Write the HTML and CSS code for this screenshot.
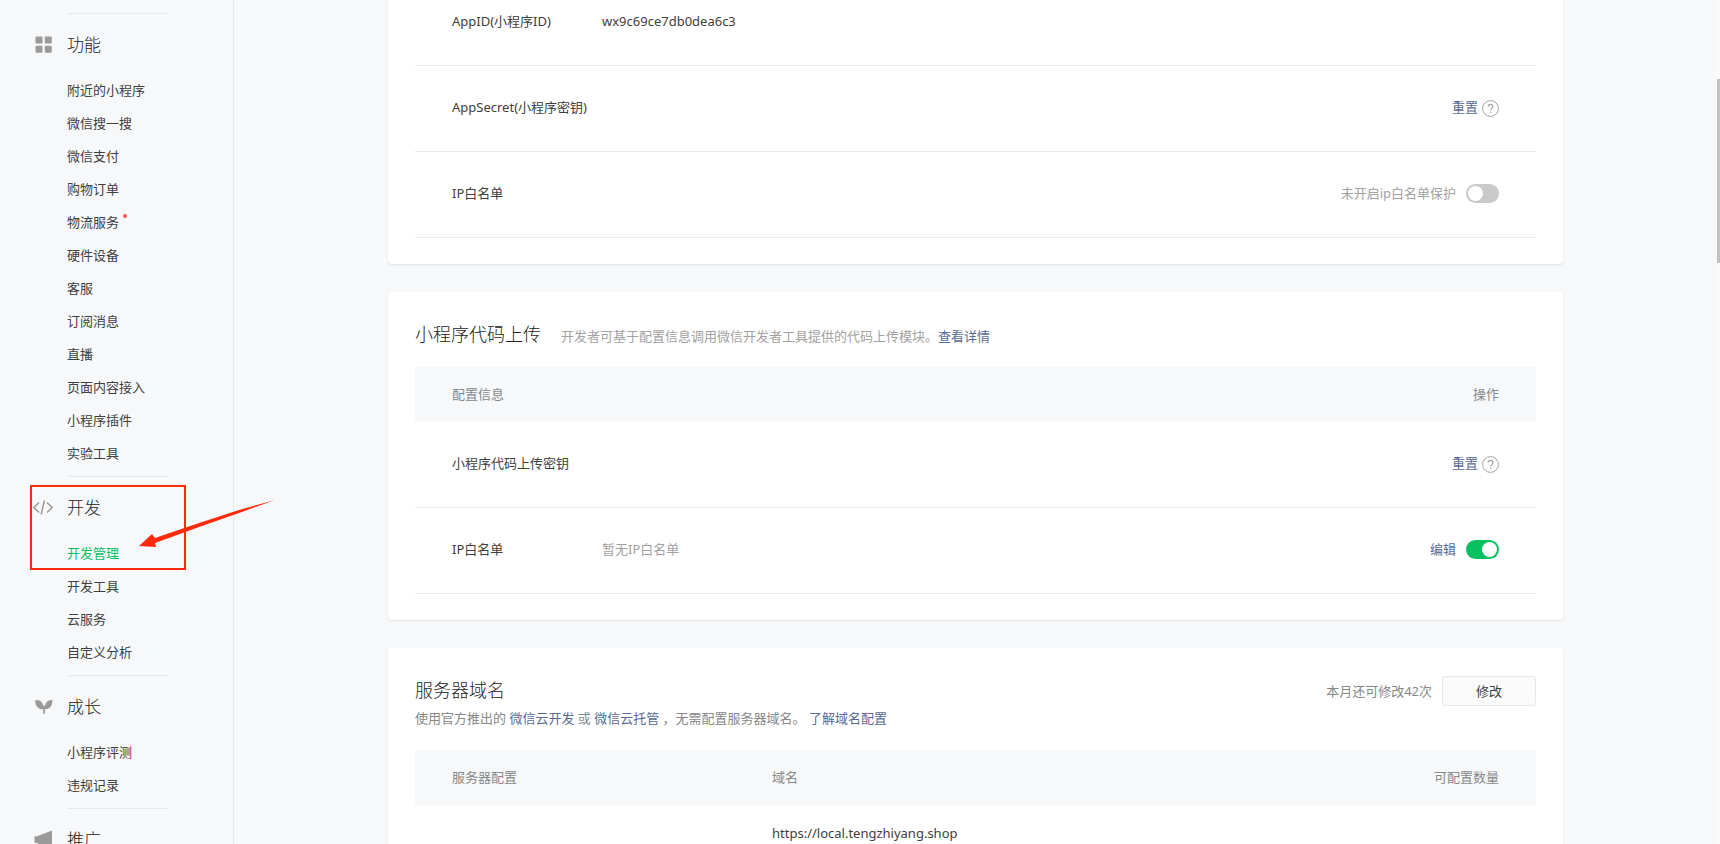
FILE: index.html
```
<!DOCTYPE html>
<html lang="zh-CN">
<head>
    <meta charset="UTF-8">
    <meta name="viewport" content="width=device-width, initial-scale=1.0">
    <title>开发管理</title>
    <link rel="stylesheet" href="styles.css">
</head>
<body>
    <div class="layout">
        <nav class="sidebar">
            <section class="menu-group">
                <h2 class="menu-title">
                    <svg class="menu-icon" viewBox="0 0 20 20" fill="#9a9a9a">
                        <rect x="2.5" y="1.5" width="7" height="7" rx="1"/>
                        <rect x="11.8" y="1.5" width="7" height="7" rx="1"/>
                        <rect x="2.5" y="10.8" width="7" height="7" rx="1"/>
                        <rect x="11.8" y="10.8" width="7" height="7" rx="1"/>
                    </svg>
                    功能
                </h2>
                <ul class="menu-list">
                    <li><a href="#">附近的小程序</a></li>
                    <li><a href="#">微信搜一搜</a></li>
                    <li><a href="#">微信支付</a></li>
                    <li><a href="#">购物订单</a></li>
                    <li><a href="#" class="has-dot">物流服务</a></li>
                    <li><a href="#">硬件设备</a></li>
                    <li><a href="#">客服</a></li>
                    <li><a href="#">订阅消息</a></li>
                    <li><a href="#">直播</a></li>
                    <li><a href="#">页面内容接入</a></li>
                    <li><a href="#">小程序插件</a></li>
                    <li><a href="#">实验工具</a></li>
                </ul>
            </section>

            <section class="menu-group">
                <h2 class="menu-title">
                    <svg class="menu-icon" viewBox="0 0 20 20" fill="none" stroke="#9a9a9a" stroke-width="1.5">
                        <path d="M6 4.5 L0.8 9.5 L6 14.5 M14 4.5 L19.2 9.5 L14 14.5 M11.3 2.5 L8.2 16.5"/>
                    </svg>
                    开发
                </h2>
                <ul class="menu-list">
                    <li><a href="#" class="active">开发管理</a></li>
                    <li><a href="#">开发工具</a></li>
                    <li><a href="#">云服务</a></li>
                    <li><a href="#">自定义分析</a></li>
                </ul>
                <!-- highlight around the current entry -->
                <div class="mark-box"></div>
                <svg class="mark-arrow" viewBox="0 0 136 50" fill="#ff2a0a">
                    <path d="M0 46 L13 34 L16 38 L60 23 L100 10 L136 0 L100 13 L60 27 L16 43 L17 47 Z"/>
                </svg>
            </section>

            <section class="menu-group">
                <h2 class="menu-title">
                    <svg class="menu-icon" viewBox="0 0 20 20" fill="#9a9a9a">
                        <path d="M2.3 3 C8 2.8 10.6 5.5 10.4 12.2 C5.6 13 2 9 2.3 3 Z"/>
                        <path d="M19.4 3 C14.2 2.8 11.6 6 11.9 12.2 C16.4 12.6 19.6 9 19.4 3 Z"/>
                        <path d="M10.1 8.5 h1.8 v8.3 h-1.8 Z"/>
                    </svg>
                    成长
                </h2>
                <ul class="menu-list">
                    <li><a href="#">小程序评测</a></li>
                    <li><a href="#">违规记录</a></li>
                </ul>
            </section>

            <section class="menu-group">
                <h2 class="menu-title">
                    <svg class="menu-icon" viewBox="0 0 20 20" fill="#9a9a9a">
                        <path d="M1.5 6.5 Q1.5 6 2.5 6 L3.5 6.5 L19 0.5 V17 L9 14 V18 H5 V13 H3 Q1.5 13 1.5 12 Z"/>
                    </svg>
                    推广
                </h2>
            </section>
        </nav>

        <main class="main">
            <div class="content">
                <section class="card card-first">
                    <table class="data-table">
                        <tbody>
                            <tr>
                                <td class="col-label">AppID(小程序ID)</td>
                                <td>wx9c69ce7db0dea6c3</td>
                                <td class="col-action"></td>
                            </tr>
                            <tr>
                                <td class="col-label">AppSecret(小程序密钥)</td>
                                <td></td>
                                <td class="col-action">
                                    <div class="actions">
                                        <a href="#">重置</a>
                                        <svg class="help-icon" viewBox="0 0 17 17" fill="none" stroke="#a3a3a3">
                                            <circle cx="8.5" cy="8.5" r="7.9"/>
                                            <path d="M6.2 6.8 C6.2 3.6 10.9 3.7 10.9 6.6 C10.9 8.4 8.6 8.4 8.6 10.5 M8.6 11.8 V13.1" stroke-width="1.2"/>
                                        </svg>
                                    </div>
                                </td>
                            </tr>
                            <tr>
                                <td class="col-label">IP白名单</td>
                                <td></td>
                                <td class="col-action">
                                    <div class="actions actions-switch">
                                        <label for="ipProtect" class="tip">未开启ip白名单保护</label>
                                        <input type="checkbox" class="switch" id="ipProtect">
                                    </div>
                                </td>
                            </tr>
                        </tbody>
                    </table>
                </section>

                <section class="card">
                    <div class="card-header">
                        <h3 class="card-title">小程序代码上传</h3>
                        <p class="card-desc light">开发者可基于配置信息调用微信开发者工具提供的代码上传模块。<a href="#">查看详情</a></p>
                    </div>
                    <table class="data-table">
                        <thead>
                            <tr>
                                <th class="col-label">配置信息</th>
                                <th></th>
                                <th class="col-action">操作</th>
                            </tr>
                        </thead>
                        <tbody>
                            <tr>
                                <td class="col-label">小程序代码上传密钥</td>
                                <td></td>
                                <td class="col-action">
                                    <div class="actions">
                                        <a href="#">重置</a>
                                        <svg class="help-icon" viewBox="0 0 17 17" fill="none" stroke="#a3a3a3">
                                            <circle cx="8.5" cy="8.5" r="7.9"/>
                                            <path d="M6.2 6.8 C6.2 3.6 10.9 3.7 10.9 6.6 C10.9 8.4 8.6 8.4 8.6 10.5 M8.6 11.8 V13.1" stroke-width="1.2"/>
                                        </svg>
                                    </div>
                                </td>
                            </tr>
                            <tr>
                                <td class="col-label"><label for="uploadIp">IP白名单</label></td>
                                <td class="tip">暂无IP白名单</td>
                                <td class="col-action">
                                    <div class="actions actions-switch">
                                        <a href="#">编辑</a>
                                        <input type="checkbox" class="switch" id="uploadIp" checked>
                                    </div>
                                </td>
                            </tr>
                        </tbody>
                    </table>
                </section>

                <section class="card">
                    <div class="card-header domain-header">
                        <div>
                            <h3 class="card-title">服务器域名</h3>
                            <p class="card-desc">使用官方推出的 <a href="#">微信云开发</a> 或 <a href="#">微信云托管</a> ，无需配置服务器域名。 <a href="#">了解域名配置</a></p>
                        </div>
                        <div class="modify">
                            <span>本月还可修改42次</span>
                            <button type="button" class="btn">修改</button>
                        </div>
                    </div>
                    <table class="data-table domain-table">
                        <thead>
                            <tr>
                                <th class="col-server">服务器配置</th>
                                <th>域名</th>
                                <th class="col-action">可配置数量</th>
                            </tr>
                        </thead>
                        <tbody>
                            <tr>
                                <td></td>
                                <td>https://local.tengzhiyang.shop</td>
                                <td></td>
                            </tr>
                        </tbody>
                    </table>
                </section>
            </div>
        </main>

        <div class="scroll-track">
            <div class="scroll-thumb"></div>
        </div>
    </div>
</body>
</html>
```
FILE: styles.css
```
:root {
    --bg: #f6f8fa;
    --text: #404040;
    --muted: #868889;
    --light: #a2a2a2;
    --line: #e7e8ea;
    --link: #576b95;
    --green: #07c160;
    --mark: #ff2a0a;
}

* {
    margin: 0;
    padding: 0;
    box-sizing: border-box;
}

body {
    font-family: "Noto Sans", "Noto Sans CJK SC", sans-serif;
    font-size: 13px;
    line-height: 20px;
    color: var(--text);
    background-color: var(--bg);
}

a {
    color: var(--link);
    text-decoration: none;
}

.layout {
    display: flex;
    height: 100vh;
    overflow: hidden;
}

/* Sidebar */
.sidebar {
    flex: none;
    width: 234px;
    padding-top: 13px;
    background-color: #f7f8fa;
    border-right: 1px solid var(--line);
}

.menu-group {
    position: relative;
    padding-bottom: 6px;
}

.menu-group::before {
    content: "";
    display: block;
    width: 101px;
    height: 1px;
    margin-left: 68px;
    background-color: var(--line);
}

.menu-title {
    display: flex;
    align-items: center;
    gap: 14px;
    height: 60px;
    padding-top: 2px;
    padding-left: 33px;
    font-size: 17px;
    font-weight: 300;
    color: #222;
}

.menu-icon {
    width: 20px;
    height: 20px;
}

.menu-list {
    list-style: none;
}

.menu-list li {
    height: 33px;
    padding-left: 67px;
    line-height: 32px;
}

.menu-list a {
    color: var(--text);
}

.menu-list a.active {
    color: var(--green);
}

.has-dot {
    position: relative;
}

.has-dot::after {
    content: "";
    position: absolute;
    top: 1px;
    right: -8px;
    width: 4px;
    height: 4px;
    border-radius: 50%;
    background-color: #fa5151;
}

.mark-box {
    position: absolute;
    top: 9px;
    left: 30px;
    width: 156px;
    height: 85px;
    border: 2px solid var(--mark);
}

.mark-arrow {
    position: absolute;
    top: 24px;
    left: 139px;
    width: 136px;
    height: 50px;
}

/* Main content */
.main {
    flex: 1;
    min-width: 0;
    padding: 0 28px;
}

.content {
    display: flex;
    flex-direction: column;
    gap: 28px;
    max-width: 1175px;
    margin: 0 auto;
}

.card {
    padding: 0 27px 26px;
    background-color: #fff;
    border-radius: 4px;
    box-shadow: 0 1px 2px rgba(0, 0, 0, 0.1);
}

/* page is scrolled into the first card */
.card-first {
    margin-top: -20px;
}

.card-header {
    display: flex;
    align-items: baseline;
    gap: 20px;
    height: 75px;
    padding-top: 28px;
}

.card-title {
    font-size: 18px;
    line-height: 28px;
    font-weight: 300;
    color: #222;
}

.card-desc {
    color: var(--muted);
}

.card-desc.light,
.tip {
    color: var(--light);
}

.domain-header {
    justify-content: space-between;
    align-items: flex-start;
    height: 102px;
}

.domain-header .card-desc {
    margin-top: 4px;
}

.modify {
    display: flex;
    align-items: center;
    gap: 10px;
    color: var(--muted);
}

.btn {
    width: 94px;
    height: 30px;
    font: inherit;
    color: var(--text);
    background-color: #fafafa;
    border: 1px solid var(--line);
    border-radius: 3px;
    cursor: pointer;
}

/* Tables */
.data-table {
    width: 100%;
    table-layout: fixed;
    border-collapse: separate;
    border-spacing: 0;
}

.data-table th {
    height: 55px;
    padding-bottom: 2px;
    font-weight: 400;
    text-align: left;
    color: var(--muted);
    background-color: var(--bg);
}

.data-table td {
    height: 86px;
    padding-bottom: 3px;
    border-bottom: 1px solid var(--line);
}

.data-table .col-label {
    width: 187px;
    padding-left: 37px;
    white-space: nowrap;
}

.data-table .col-server {
    width: 357px;
    padding-left: 37px;
}

.data-table .col-action {
    width: 300px;
    padding-right: 37px;
    text-align: right;
}

.domain-table td {
    height: 59px;
    border-bottom: none;
}

.actions {
    display: flex;
    align-items: flex-end;
    justify-content: flex-end;
    gap: 4px;
}

.actions-switch {
    align-items: center;
    gap: 10px;
}

.help-icon {
    width: 17px;
    height: 17px;
}

.switch {
    appearance: none;
    width: 33px;
    height: 19px;
    padding: 2px;
    border-radius: 10px;
    background-color: #c9c9c9;
    cursor: pointer;
}

.switch::before {
    content: "";
    display: block;
    width: 15px;
    height: 15px;
    border-radius: 50%;
    background-color: #fff;
}

.switch:checked {
    background-color: var(--green);
}

.switch:checked::before {
    margin-left: auto;
}

/* Scroll bar */
.scroll-track {
    flex: none;
    width: 3px;
    padding-top: 79px;
    background-color: #fafafa;
}

.scroll-thumb {
    height: 184px;
    background-color: #c1c1c1;
}
```
